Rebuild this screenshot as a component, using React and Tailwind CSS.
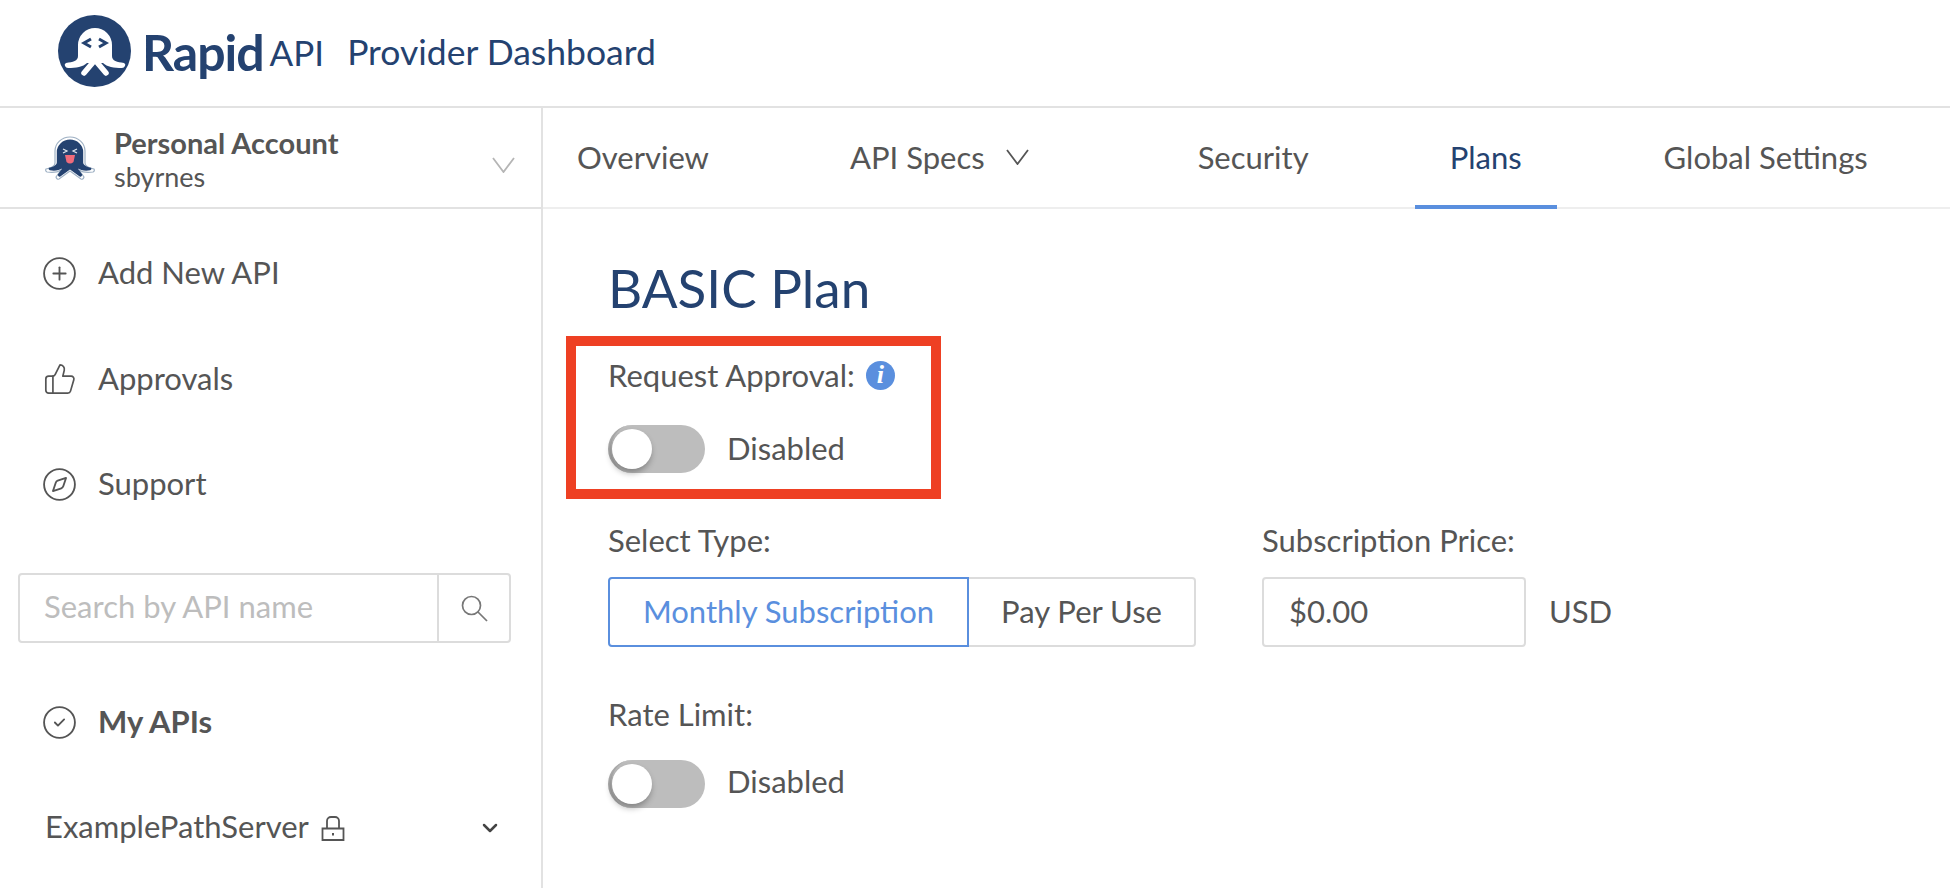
import React from 'react';
import { ChevronDown, CirclePlus, ThumbsUp, Compass, CircleCheck } from 'lucide-react';

const LatoFont = { fontFamily: 'Lato, "Open Sans", sans-serif' };

const LogoMark = () => (
  <svg width="73" height="72" viewBox="0 0 73 72" className="shrink-0">
    <ellipse cx="36.5" cy="36" rx="36.5" ry="36" fill="#244270" />
    <path
      d="M20 30a17 17 0 0 1 34 0v11c0 5 5 6 12 7q2 1 1 3-1 2-3 2c-8 0-15-1-19-5H29c-4 4-11 5-19 5q-2 0-3-2-1-2 1-3c7-1 12-2 12-7z"
      fill="#fff"
    />
    <path d="M37 45L26 58M37 45l11 13" fill="none" stroke="#fff" strokeWidth="5.5" strokeLinecap="round" />
    <path d="M33 24l-7 4 7 4M41 24l7 4-7 4" fill="none" stroke="#244270" strokeWidth="3" />
  </svg>
);

const AVATAR_PATH =
  'M10 17a15 14 0 0 1 30 0v12c0 3 4 5 9 6q1 2-1 3c-6 1-11 0-14-2l5 7q-1 3-3 2l-11-8-11 8q-2 1-3-2l5-7c-3 2-8 3-14 2q-2-1-1-3c5-1 9-3 9-6z';

const AccountAvatar = () => (
  <svg width="50" height="48" viewBox="0 0 50 48" className="shrink-0">
    <path d={AVATAR_PATH} fill="#fff" stroke="#9fb1c4" strokeWidth="1.2" />
    <path d={AVATAR_PATH} fill="#244270" transform="translate(25 24) scale(0.88) translate(-25 -24)" />
    <path d="M18 15l4 2-4 2M32 15l-4 2 4 2" fill="none" stroke="#dfe6ee" strokeWidth="1.2" />
    <path d="M20 21h10l-1.5 7q-3.5 3-7 0z" fill="#ef6b7b" />
  </svg>
);

const VeeChevron = ({ stroke, className = '' }) => (
  <svg width="23" height="16" viewBox="0 0 23 16" fill="none" stroke={stroke} strokeWidth="1.8" className={`shrink-0 ${className}`}>
    <path d="M1 1l10.5 14L22 1" />
  </svg>
);

const LockIcon = () => (
  <svg width="24" height="27" viewBox="0 0 24 27" fill="none" stroke="#555" strokeWidth="1.8" className="shrink-0">
    <path d="M1.5 13.5h21v11.5h-21zM6 13.5V6a4 4 0 0 1 4-4h4a4 4 0 0 1 4 4v7.5" />
    <path d="M12 18v2.5" strokeWidth="2" />
  </svg>
);

const SearchIcon = () => (
  <svg width="27" height="27" viewBox="0 0 27 27" fill="none" stroke="#777" strokeWidth="1.7" className="shrink-0">
    <circle cx="10.5" cy="10.5" r="9" />
    <path d="M17 17l9 9" />
  </svg>
);

const InfoIcon = () => (
  <span className="ml-[11px] flex h-[29px] w-[29px] items-center justify-center rounded-full bg-[#5a8fde] font-['Liberation_Serif',serif] text-[26px] font-bold italic leading-none text-white">
    i
  </span>
);

const Toggle = () => (
  <div className="flex h-[48px] w-[97px] items-center rounded-full border-l-[3px] border-[#aaaaaa] bg-[#bdbdbd] pl-[1px]">
    <div className="h-[40px] w-[40px] rounded-full bg-white shadow-[-1px_4px_6px_rgba(0,0,0,0.3)]" />
  </div>
);

const ToggleRow = ({ className, textClass }) => (
  <div className={`flex items-center gap-[22px] ${className}`}>
    <Toggle />
    <span className={`leading-none ${textClass}`}>Disabled</span>
  </div>
);

const NavRow = ({ icon: Icon, label, size = 37, className = '' }) => (
  <div className={`flex h-[40px] items-center pl-[41px] ${className}`}>
    <span className="flex w-[37px] shrink-0 justify-center">
      <Icon size={size} strokeWidth={1.2} className="text-[#555]" />
    </span>
    <span className="ml-[20px] pb-[2px]">{label}</span>
  </div>
);

const TABS = [
  { label: 'Overview', cls: 'ml-[34px] border-transparent' },
  { label: 'API Specs', cls: 'ml-[141px] border-transparent', chevron: true },
  { label: 'Security', cls: 'ml-[169px] border-transparent' },
  { label: 'Plans', cls: 'ml-[106px] px-[35px] text-[#244270] border-[#5a8fde]' },
  { label: 'Global Settings', cls: 'ml-[107px] border-transparent' },
];

export default function App() {
  return (
    <div style={LatoFont} className="h-[888px] w-[1950px] overflow-hidden bg-white text-[31px] text-[#555]">
      <header className="flex h-[108px] items-center border-b-2 border-[#e2e2e2] pb-[4px] pl-[58px]">
        <LogoMark />
        <span className="ml-[11px] mt-[2px] text-[50px] font-bold leading-none tracking-[-1px] text-[#244270]">Rapid</span>
        <span className="ml-[6px] mt-[2px] text-[35px] leading-none text-[#244270]">API</span>
        <span className="ml-[23px] mt-[1px] text-[35.5px] leading-none text-[#244270]">Provider Dashboard</span>
      </header>

      <div className="flex h-[780px]">
        <aside className="w-[543px] shrink-0 border-r-2 border-[#e2e2e2]">
          <div className="flex h-[101px] items-center border-b-2 border-[#e2e2e2] pl-[45px] pr-[26px]">
            <AccountAvatar />
            <div className="ml-[19px] mt-[5px] flex-1 leading-[34px]">
              <div className="text-[29px] font-bold">Personal Account</div>
              <div className="text-[27px]">sbyrnes</div>
            </div>
            <VeeChevron stroke="#b5b5b5" className="mt-[14px]" />
          </div>

          <NavRow icon={CirclePlus} label="Add New API" className="mt-[44px]" />
          <NavRow icon={ThumbsUp} size={34} label="Approvals" className="mt-[66px]" />
          <NavRow icon={Compass} label="Support" className="mt-[65px]" />

          <div className="ml-[18px] mt-[69px] flex h-[70px] w-[493px] items-center rounded border-2 border-[#dcdcdc]">
            <span className="flex-1 pb-[3px] pl-[24px] text-[#bdbdbd]">Search by API name</span>
            <div className="flex h-full w-[72px] items-center justify-center border-l-2 border-[#dcdcdc]">
              <SearchIcon />
            </div>
          </div>

          <NavRow icon={CircleCheck} label={<b>My APIs</b>} className="mt-[59px]" />

          <div className="mt-[66px] flex h-[40px] items-center pl-[45px] pr-[39px]">
            <span className="pb-[3px]">ExamplePathServer</span>
            <span className="ml-[12px]"><LockIcon /></span>
            <ChevronDown size={24} strokeWidth={2.5} className="ml-auto text-[#444]" />
          </div>
        </aside>

        <main className="flex-1">
          <nav className="flex h-[101px] items-stretch border-b-2 border-[#eeeeee]">
            {TABS.map((tab) => (
              <div
                key={tab.label}
                className={`-mb-[2px] flex items-center whitespace-nowrap border-b-[4px] pt-[1px] ${tab.cls}`}
              >
                {tab.label}
                {tab.chevron && <VeeChevron stroke="#555" className="ml-[21px]" />}
              </div>
            ))}
          </nav>

          <section className="pl-[65px]">
            <h1 className="mt-[49px] text-[53px] font-normal leading-[60px] text-[#244270]">BASIC Plan</h1>

            <div className="-ml-[42px] mt-[18px] h-[163px] w-[375px] border-[10px] border-[#ee4023] pl-[32px] pt-[12px]">
              <div className="flex h-[34px] items-center">
                Request Approval:
                <InfoIcon />
              </div>
              <ToggleRow className="mt-[33px]" textClass="pb-[2px]" />
            </div>

            <div className="mt-[23px] flex">
              <div className="w-[654px]">
                <div className="h-[36px] leading-[36px]">Select Type:</div>
                <div className="mt-[19px] flex h-[70px] w-[588px]">
                  <div className="flex w-[361px] items-center justify-center rounded-l border-2 border-[#5a8fde] pb-[2px] text-[#5a8fde]">
                    Monthly Subscription
                  </div>
                  <div className="flex flex-1 items-center justify-center rounded-r border-2 border-l-0 border-[#dcdcdc] pb-[2px]">
                    Pay Per Use
                  </div>
                </div>
              </div>
              <div>
                <div className="h-[36px] leading-[36px]">Subscription Price:</div>
                <div className="mt-[19px] flex h-[70px] items-center">
                  <div className="flex h-full w-[264px] items-center rounded border-2 border-[#dcdcdc] pb-[2px] pl-[25px]">$0.00</div>
                  <span className="ml-[23px] pb-[2px]">USD</span>
                </div>
              </div>
            </div>

            <div className="mt-[49px] h-[36px] leading-[36px]">Rate Limit:</div>
            <ToggleRow className="mt-[28px]" textClass="pb-[6px]" />
          </section>
        </main>
      </div>
    </div>
  );
}
